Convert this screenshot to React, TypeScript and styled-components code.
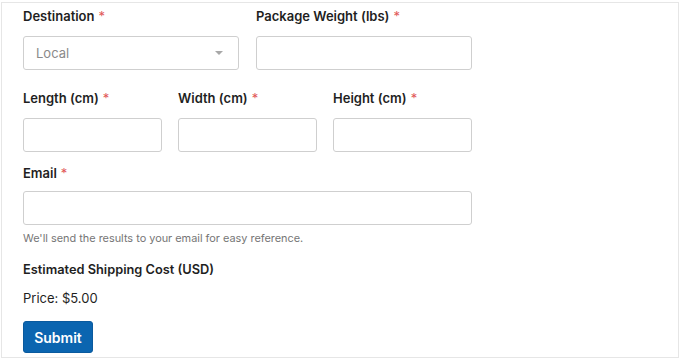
import React from "react";
import styled, { createGlobalStyle } from "styled-components";

const GlobalStyle = createGlobalStyle`
  html, body {
    margin: 0;
    padding: 0;
    background: #ffffff;
  }
  body {
    font-family: Inter, "Liberation Sans", Arial, sans-serif;
    color: #1f1f1f;
  }
`;

const Page = styled.div`
  padding: 2px 1px 2px 1px;
  width: 680px;
  height: 360px;
  box-sizing: border-box;
`;

const Frame = styled.div`
  border: 1px solid #e6e6e6;
  height: 356px;
  box-sizing: border-box;
  padding: 4px 0 0 21px;
  overflow: hidden;
`;

const Form = styled.form`
  width: 449px;
  display: flex;
  flex-direction: column;
`;

const Row = styled.div<{ $cols: number; $gap?: number; $mt?: number }>`
  display: grid;
  grid-template-columns: repeat(${(p) => p.$cols}, minmax(0, 1fr));
  column-gap: ${(p) => p.$gap ?? 17}px;
  margin-top: ${(p) => p.$mt ?? 0}px;
`;

const Field = styled.div`
  display: flex;
  flex-direction: column;
  min-width: 0;
`;

const Label = styled.label<{ $mb?: number }>`
  font-size: 13px;
  font-weight: 600;
  line-height: 18px;
  color: #1f1f1f;
  margin-bottom: ${(p) => p.$mb ?? 11}px;
`;

const Required = styled.span`
  color: #e15858;
  font-weight: 400;
  margin-left: 4px;
`;

const Input = styled.input`
  width: 100%;
  height: 34px;
  box-sizing: border-box;
  border: 1px solid #cfcfcf;
  border-radius: 3px;
  background: #fff;
  padding: 0 12px;
  font: inherit;
  font-size: 13px;
  outline: none;
`;

const SelectBox = styled.div`
  height: 34px;
  box-sizing: border-box;
  border: 1px solid #cfcfcf;
  border-radius: 3px;
  padding: 0 12px;
  display: flex;
  align-items: center;
  justify-content: space-between;
  font-size: 13px;
  color: #8a8a8a;
`;

const Caret = styled.span`
  width: 0;
  height: 0;
  border-left: 4px solid transparent;
  border-right: 4px solid transparent;
  border-top: 4px solid #a8a8a8;
  margin-right: 3px;
`;

const Help = styled.div`
  font-size: 10.9px;
  line-height: 16px;
  color: #767676;
  margin-top: 5px;
`;

const Heading = styled.div`
  font-size: 12.8px;
  font-weight: 600;
  line-height: 18px;
  margin-top: 15px;
`;

const Price = styled.div`
  font-size: 13px;
  line-height: 18px;
  margin-top: 10px;
`;

const SubmitButton = styled.button`
  align-self: flex-start;
  margin-top: 14px;
  height: 32px;
  width: 70px;
  padding: 0;
  background: #0b65b0;
  color: #fff;
  border: 1px solid #0a5a9e;
  border-radius: 3px;
  font: inherit;
  font-size: 14px;
  font-weight: 600;
  cursor: pointer;
`;

const Req = ({ children, mb }: { children: React.ReactNode; mb?: number }) => (
  <Label $mb={mb}>
    {children}
    <Required>*</Required>
  </Label>
);

export default function App() {
  return (
    <>
      <GlobalStyle />
      <Page>
        <Frame>
          <Form onSubmit={(e) => e.preventDefault()}>
            <Row $cols={2}>
              <Field>
                <Req>Destination</Req>
                <SelectBox>
                  <span>Local</span>
                  <Caret />
                </SelectBox>
              </Field>
              <Field>
                <Req>Package Weight (lbs)</Req>
                <Input />
              </Field>
            </Row>
            <Row $cols={3} $gap={16} $mt={19}>
              <Field>
                <Req>Length (cm)</Req>
                <Input />
              </Field>
              <Field>
                <Req>Width (cm)</Req>
                <Input />
              </Field>
              <Field>
                <Req>Height (cm)</Req>
                <Input />
              </Field>
            </Row>
            <Row $cols={1} $mt={12}>
              <Field>
                <Req mb={9}>Email</Req>
                <Input type="email" />
              </Field>
            </Row>
            <Help>We'll send the results to your email for easy reference.</Help>
            <Heading>Estimated Shipping Cost (USD)</Heading>
            <Price>Price: $5.00</Price>
            <SubmitButton type="submit">Submit</SubmitButton>
          </Form>
        </Frame>
      </Page>
    </>
  );
}
